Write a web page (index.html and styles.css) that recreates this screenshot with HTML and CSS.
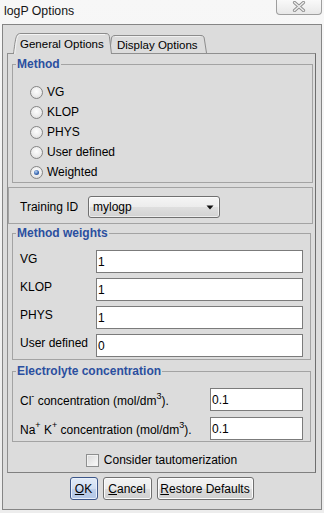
FILE: index.html
```html
<!DOCTYPE html>
<html>
<head>
<meta charset="utf-8">
<title>logP Options</title>
<link rel="stylesheet" href="styles.css">
</head>
<body>
<div class="titlebar">
  <span class="title">logP Options</span>
  <span class="close">
    <svg class="close-x" width="14" height="11" viewBox="0 0 14 11">
      <path d="M2.5 1.5 L11.5 9.5 M11.5 1.5 L2.5 9.5" stroke="#8d8d8d" stroke-width="3.2" stroke-linecap="round"/>
      <path d="M2.5 1.5 L11.5 9.5 M11.5 1.5 L2.5 9.5" stroke="#eeeeee" stroke-width="1.5" stroke-linecap="round"/>
    </svg>
  </span>
</div>
<div class="frame">
  <div class="tabbar">
    <div class="tab tab-active">
      <svg class="tab-shape" width="99" height="21" viewBox="0 0 99 21">
        <path d="M0.5 21 C1.2 15 2.2 7 3.4 3.5 C4.2 1.3 5.5 0.5 8 0.5 L93 0.5 C95 0.5 96 1.5 96.4 3.5 L98.5 21" fill="#dcdcdc" stroke="#8c8c8c"/>
        <path d="M1.8 21 C2.4 15 3.3 7.5 4.4 4.2 C5.1 2.3 6 1.5 8 1.5 L92 1.5" fill="none" stroke="#f4f4f4"/>
      </svg>
      <span class="tab-text">General Options</span>
    </div>
    <div class="tab tab-inactive">
      <svg class="tab-shape" width="98" height="18" viewBox="0 0 98 18">
        <path d="M0.5 18 L2.5 3 C3 1.2 4 0.5 6 0.5 L92 0.5 C94 0.5 94.8 1.4 95.2 3 L97.5 18" fill="#dcdcdc" stroke="#8c8c8c"/>
        <path d="M6 1.5 L91.5 1.5" fill="none" stroke="#f0f0f0"/>
      </svg>
      <span class="tab-text">Display Options</span>
    </div>
  </div>
  <div class="pane">
    <fieldset class="group group-method">
      <legend>Method</legend>
      <div class="method-body">
        <div class="radio-row"><span class="radio"></span>VG</div>
        <div class="radio-row"><span class="radio"></span>KLOP</div>
        <div class="radio-row"><span class="radio"></span>PHYS</div>
        <div class="radio-row"><span class="radio"></span>User defined</div>
        <div class="radio-row"><span class="radio radio-checked"></span>Weighted</div>
      </div>
    </fieldset>
    <div class="training">
      <span class="training-label">Training ID</span>
      <div class="combo">
        <span class="combo-text">mylogp</span>
        <svg class="combo-arrow" width="8" height="5" viewBox="0 0 8 5"><path d="M0.5 0.5 L7.5 0.5 L4 4.5 Z" fill="#111"/></svg>
      </div>
    </div>
    <fieldset class="group group-weights">
      <legend>Method weights</legend>
      <div class="fields weights-body">
        <div class="field-row"><span class="field-label">VG</span><span class="input">1</span></div>
        <div class="field-row"><span class="field-label">KLOP</span><span class="input">1</span></div>
        <div class="field-row"><span class="field-label">PHYS</span><span class="input">1</span></div>
        <div class="field-row"><span class="field-label">User defined</span><span class="input">0</span></div>
      </div>
    </fieldset>
    <fieldset class="group group-electro">
      <legend>Electrolyte concentration</legend>
      <div class="fields electro-body">
        <div class="field-row"><span class="field-label">Cl<sup>-</sup> concentration (mol/dm<sup>3</sup>).</span><span class="input">0.1</span></div>
        <div class="field-row"><span class="field-label">Na<sup>+</sup> K<sup>+</sup> concentration (mol/dm<sup>3</sup>).</span><span class="input">0.1</span></div>
      </div>
    </fieldset>
    <div class="check-row"><span class="checkbox"></span><span>Consider tautomerization</span></div>
  </div>
  <div class="buttons">
    <span class="btn btn-ok"><u>O</u>K</span>
    <span class="btn btn-cancel"><u>C</u>ancel</span>
    <span class="btn btn-restore"><u>R</u>estore Defaults</span>
  </div>
</div>
</body>
</html>
```
FILE: styles.css
```css
* { box-sizing: border-box; }
html, body { margin: 0; padding: 0; }
body {
  width: 324px;
  height: 513px;
  overflow: hidden;
  background: linear-gradient(#f7f7f7, #ededed);
  font-family: "Liberation Sans", Arial, sans-serif;
  font-size: 12px;
  color: #000;
}

.titlebar {
  height: 24px;
  display: flex;
  justify-content: space-between;
  align-items: flex-start;
}
.title {
  font-size: 12.3px;
  line-height: 16px;
  padding: 3px 0 0 4px;
  color: #151515;
}
.close {
  width: 46px;
  height: 15px;
  margin-right: 2px;
  border: 1px solid #9e9e9e;
  border-top: 0;
  border-radius: 0 0 4px 4px;
  background: linear-gradient(#f9f9f9, #e8e8e8);
  display: flex;
  justify-content: center;
  align-items: flex-start;
  padding-top: 1px;
}

.frame {
  height: 486px;
  margin: 0 2px;
  border: 1px solid #858585;
  background: #dcdcdc;
  padding: 8px 5px 0 4px;
}

.tabbar {
  display: flex;
  align-items: flex-end;
  height: 20px;
  padding-left: 6px;
  position: relative;
  z-index: 1;
}
.tab { position: relative; flex: none; }
.tab-shape { position: absolute; left: 0; top: 0; }
.tab-text { position: relative; display: block; font-size: 11.5px; line-height: 15px; white-space: nowrap; }
.tab-active { width: 99px; height: 21px; margin-bottom: -1px; z-index: 2; }
.tab-active .tab-text { padding: 4px 0 0 7px; }
.tab-inactive { width: 98px; height: 18px; margin-left: -3px; }
.tab-inactive .tab-text { padding: 3px 0 0 8px; }

.pane {
  height: 420px;
  border: 1px solid #8f8f8f;
  border-right-color: #6e6e6e;
  border-bottom-color: #808080;
}

.group {
  border: 1px solid #a3a3a3;
  margin: 0;
  padding: 0;
  min-width: 0;
}
.group legend {
  font-weight: bold;
  color: #2b4f9f;
  padding: 0 1px;
  margin-left: 3px;
  line-height: 14px;
}

.group-method { margin: 3px 2px 0 4px; }
.method-body { padding: 11px 0 0 17px; }
.radio-row {
  display: flex;
  align-items: center;
  height: 20px;
  gap: 4px;
}
.radio {
  position: relative;
  flex: none;
  width: 13px;
  height: 13px;
  border-radius: 50%;
  border: 1px solid #858585;
  background: radial-gradient(circle at 50% 40%, #fefefe 0, #ececec 55%, #d2d2d2 100%);
}
.radio-checked::after {
  content: "";
  position: absolute;
  left: 3px;
  top: 3px;
  width: 5px;
  height: 5px;
  border-radius: 50%;
  background: radial-gradient(circle at 40% 35%, #bcd5f3 0, #3a69b3 55%, #1b3e7c 100%);
}

.training {
  margin: 4px 2px 0 0;
  height: 37px;
  border: 1px solid #a3a3a3;
  display: flex;
  align-items: center;
  padding: 3px 0 0 11px;
}
.training-label { width: 68px; flex: none; }
.combo {
  width: 132px;
  height: 22px;
  border: 1px solid #707070;
  border-radius: 3px;
  background: linear-gradient(#f5f5f5 0, #ececec 50%, #dfdfdf 50%, #d2d2d2 100%);
  box-shadow: inset 0 0 0 1px rgba(255, 255, 255, 0.6);
  display: flex;
  align-items: center;
  justify-content: space-between;
  padding: 0 5px 0 4px;
  line-height: 14px;
}
.combo-arrow { display: block; }

.group-weights { margin: 2px 4px 0 4px; }
.group-electro { margin: 4px 4px 0 4px; }
.fields { display: flex; flex-direction: column; }
.weights-body { padding: 10px 7px 2px 7px; gap: 5px; }
.electro-body { padding: 10px 7px 1px 7px; gap: 6px; }
.field-row { display: flex; height: 23px; }
.field-label { width: 76px; flex: none; padding-top: 2px; line-height: 14px; white-space: nowrap; }
.electro-body .field-label { flex: 1; width: auto; padding-top: 6px; }
.field-label sup { font-size: 9px; line-height: 0; vertical-align: 6px; }
.input {
  flex: 1;
  height: 23px;
  border: 1px solid #7b7b7b;
  background: #fff;
  padding: 4px 0 0 1px;
  line-height: 14px;
}
.electro-body .input { flex: none; width: 93px; }

.check-row {
  margin-top: 8px;
  height: 20px;
  display: flex;
  align-items: center;
  justify-content: center;
  gap: 5px;
}
.checkbox {
  width: 13px;
  height: 13px;
  border: 1px solid #8e8f8f;
  background: linear-gradient(135deg, #d8d8d8, #fbfbfb);
  box-shadow: inset 0 0 0 1px #f2f2f2;
}

.buttons {
  margin-top: 4px;
  display: flex;
  justify-content: center;
  gap: 5px;
}
.btn {
  height: 23px;
  border: 1px solid #707070;
  border-radius: 3px;
  background: linear-gradient(#f3f3f3 0, #ebebeb 50%, #dddddd 50%, #cfcfcf 100%);
  box-shadow: inset 0 0 0 1px #fcfcfc;
  display: flex;
  align-items: center;
  justify-content: center;
  line-height: 14px;
  white-space: nowrap;
}
.btn-ok {
  width: 28px;
  border-color: #3c5689;
  background: linear-gradient(#e2ebf7 0, #d1def1 50%, #bfd0ea 50%, #b3c7e6 100%);
  box-shadow: inset 0 0 0 1px #e9f0fa;
}
.btn-cancel { width: 49px; }
.btn-restore { width: 97px; }
```
